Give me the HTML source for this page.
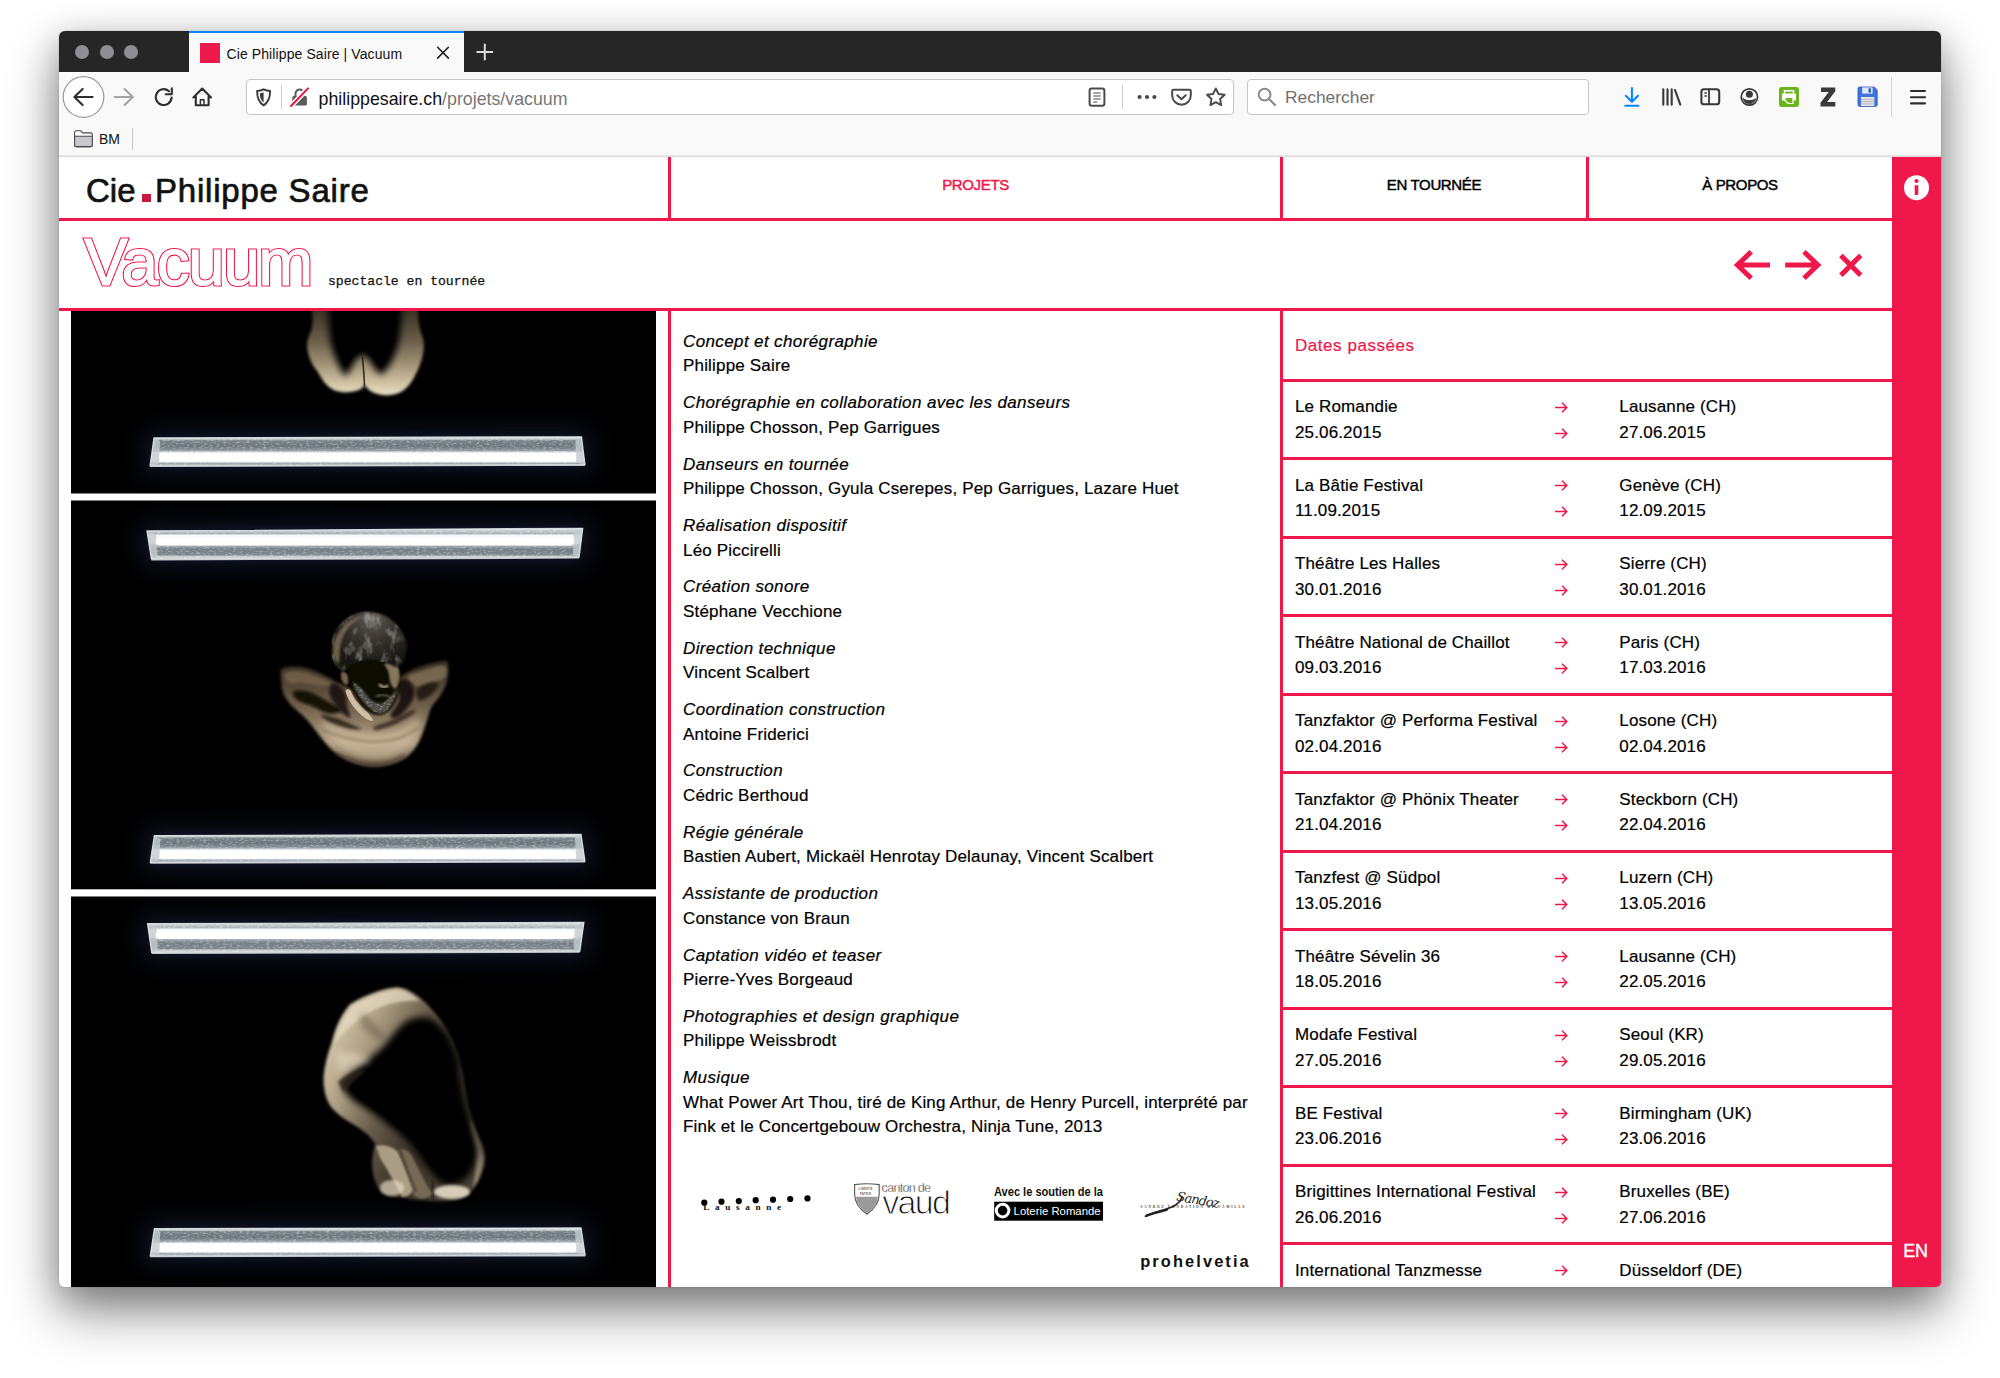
<!DOCTYPE html>
<html lang="fr">
<head>
<meta charset="utf-8">
<title>Cie Philippe Saire | Vacuum</title>
<style>
html,body{margin:0;padding:0;background:#fff;}
body{width:2000px;height:1378px;overflow:hidden;position:relative;font-family:"Liberation Sans",sans-serif;color:#000;}
#win{position:absolute;left:59px;top:31px;width:1882px;height:1256px;border-radius:6px 6px 5px 5px;overflow:hidden;background:#fff;
 box-shadow:0 0 1px rgba(0,0,0,.5),0 25px 52px rgba(0,0,0,.44),0 8px 34px rgba(0,0,0,.22);}
#abs{position:absolute;left:-59px;top:-31px;width:2000px;height:1378px;}
#abs div,#abs span,#abs svg{position:absolute;}
.r{background:#f0174b;}
/* ---------- browser chrome ---------- */
#titlebar{left:59px;top:31px;width:1882px;height:41px;background:#262626;}
.tl{width:14px;height:14px;border-radius:50%;background:#8e8e93;top:45px;}
#tab{left:189px;top:31px;width:275px;height:41px;background:#f9f9f9;}
#tab i{position:absolute;left:0;top:0;width:100%;height:2px;background:#0a84ff;}
#fav{left:200px;top:43px;width:20px;height:20px;background:#ee1a4b;}
#tabt{left:226.5px;top:44px;letter-spacing:.1px;font-size:14px;line-height:20px;color:#111;white-space:nowrap;}
#toolbar{left:59px;top:72px;width:1882px;height:84px;background:#f9f9f9;}
#tbline{left:59px;top:155px;width:1882px;height:2px;background:linear-gradient(#ececec,#d4d4d4);}
#urlbar{left:246px;top:79px;width:986px;height:34px;border:1px solid #c6c6c6;border-radius:4px;background:#fff;}
#url{left:318.5px;top:86.5px;font-size:17.8px;line-height:24px;white-space:nowrap;color:#111;}
#url b{font-weight:normal;color:#777;}
#search{left:1247px;top:79px;width:340px;height:34px;border:1px solid #c6c6c6;border-radius:4px;background:#fff;}
#searcht{left:1285px;top:85px;font-size:17.4px;line-height:24px;color:#6f6f6f;white-space:nowrap;}
#bm{left:99px;top:129px;font-size:14px;line-height:20px;color:#111;}
.vsep{width:1px;background:#c9c9c9;}
/* ---------- page ---------- */
.nav{font-size:15px;line-height:20px;top:175px;white-space:nowrap;letter-spacing:-.35px;-webkit-text-stroke:.45px currentColor;transform:translateX(-50%);}
#logo1,#logo2{font-size:33px;line-height:40px;top:171px;white-space:nowrap;color:#111;-webkit-text-stroke:.7px #111;}
#vac{left:84px;top:223.6px;font-size:66px;line-height:76px;letter-spacing:-1.6px;color:#f0174b;-webkit-text-stroke:3.1px #f0174b;white-space:nowrap;}
#vac::after{content:"Vacuum";position:absolute;left:0;top:0;color:#fff;-webkit-text-stroke:.9px #fff;}
#sub{left:328px;top:274.2px;font-family:"Liberation Mono",monospace;font-size:13.1px;line-height:16px;white-space:nowrap;color:#111;-webkit-text-stroke:.25px #111;}
.t{font-size:17px;line-height:24.6px;white-space:nowrap;letter-spacing:.18px;-webkit-text-stroke:.2px #000;}
.t i{letter-spacing:.38px;}
.d{font-size:17px;line-height:25.7px;white-space:nowrap;letter-spacing:.14px;-webkit-text-stroke:.2px #000;}
.ar{width:13px;height:11px;}
</style>
</head>
<body>
<div id="win"><div id="abs">

<!-- ======= BROWSER CHROME ======= -->
<div id="titlebar"></div>
<div class="tl" style="left:75px"></div><div class="tl" style="left:99.5px"></div><div class="tl" style="left:124px"></div>
<div id="tab"><i></i></div>
<div id="fav"></div>
<div id="tabt">Cie Philippe Saire | Vacuum</div>
<div id="toolbar"></div>
<div id="tbline"></div>
<div id="urlbar"></div>
<div id="url">philippesaire.ch<b>/projets/vacuum</b></div>
<div id="search"></div>
<div id="searcht">Rechercher</div>
<div id="bm">BM</div>
<div class="vsep" style="left:132px;top:128px;height:22px"></div>
<div class="vsep" style="left:281px;top:85px;height:24px"></div>
<div class="vsep" style="left:1122px;top:85px;height:24px"></div>
<div class="vsep" style="left:1891px;top:77px;height:40px;background:#d6d6d6"></div>
<!--CHROME-ICONS-->
<svg style="left:0;top:0" width="2000" height="160" viewBox="0 0 2000 160" fill="none" stroke-linecap="round" stroke-linejoin="round">
<!-- tab close + new tab -->
<path d="M437.6 47.3l10.8 10.8M448.4 47.3l-10.8 10.8" stroke="#1c1c1e" stroke-width="1.5"/>
<path d="M476.5 52h16.6M484.8 43.7v16.6" stroke="#dcdcdf" stroke-width="2" stroke-linecap="butt"/>
<!-- back -->
<circle cx="83.5" cy="97" r="20.3" fill="#fff" stroke="#98989b" stroke-width="1.2"/>
<path d="M92.6 97H75M82.6 88.9L74.4 97l8.2 8.1" stroke="#2e2e30" stroke-width="2.1"/>
<!-- forward -->
<path d="M114.6 97h17.6M124.6 88.9l8.2 8.1-8.2 8.1" stroke="#a4a4a6" stroke-width="2.1"/>
<!-- reload -->
<path d="M171.6 97.6a7.9 7.9 0 1 1-2.6-6.4" stroke="#2e2e30" stroke-width="2.1"/>
<path d="M171.8 88.4v5.9h-6" stroke="#2e2e30" stroke-width="2.1"/>
<!-- home -->
<path d="M193.4 97.4l8.8-8.9 8.8 8.9M195.8 96.4v8.9h12.8v-8.9" stroke="#2e2e30" stroke-width="2.1"/>
<path d="M200.4 105v-5.2h3.6v5.2" stroke="#2e2e30" stroke-width="1.5"/>
<!-- folder -->
<path d="M74.6 132.4c0-1 .7-1.7 1.700-1.700h4.300l2 2.200h8c1 0 1.700.7 1.700 1.700v10.300c0 1-.7 1.700-1.700 1.700H76.300c-1 0-1.700-.7-1.700-1.700z" fill="#fbfbfb" stroke="#4a4a4d" stroke-width="1.1"/>
<path d="M74.6 136.300h17.700v8.600c0 1-.7 1.700-1.700 1.700H76.300c-1 0-1.700-.7-1.700-1.700z" fill="#c9c9cd" stroke="#4a4a4d" stroke-width="1.1"/>
<!-- shield -->
<path d="M263.6 89.300c2.300 1.200 4.300 1.600 6.500 1.700 0 6.400-1.400 11.400-6.500 14.400-5.100-3-6.500-8-6.500-14.400 2.200-.1 4.200-.5 6.500-1.700z" stroke="#3a3a3c" stroke-width="1.9"/>
<path d="M263.6 92.200v10.400c-2.700-2-3.700-5-3.800-9.300 1.400-.2 2.600-.5 3.800-1.100z" fill="#3a3a3c" stroke="none"/>
<!-- lock with slash -->
<path d="M295.500 96v-2.300a4.100 4.100 0 0 1 8.200 0V96" stroke="#5a5a5d" stroke-width="2"/>
<rect x="292.300" y="96" width="14.600" height="9.600" rx="1.600" fill="#5a5a5d" stroke="none"/>
<path d="M290.800 106.200L308.400 88" stroke="#fff" stroke-width="5"/>
<path d="M291 106L308 88.400" stroke="#e8173f" stroke-width="2"/>
<!-- reader -->
<rect x="1089.600" y="88.400" width="14.800" height="17.400" rx="2.200" stroke="#4a4a4d" stroke-width="2"/>
<path d="M1093.300 93h7.400M1093.300 96h7.400M1093.300 99h7.400M1093.300 102h4" stroke="#4a4a4d" stroke-width="1.100" stroke-linecap="butt"/>
<!-- dots -->
<circle cx="1139.600" cy="97" r="2.100" fill="#4a4a4d"/><circle cx="1147" cy="97" r="2.100" fill="#4a4a4d"/><circle cx="1154.400" cy="97" r="2.100" fill="#4a4a4d"/>
<!-- pocket -->
<path d="M1173.400 89.700h16.200c.7 0 1.200.5 1.200 1.200v4.600a9.300 9.300 0 0 1-18.600 0v-4.600c0-.7.500-1.200 1.200-1.200z" stroke="#4a4a4d" stroke-width="2"/>
<path d="M1177.300 95.300l4.200 4 4.200-4" stroke="#4a4a4d" stroke-width="2"/>
<!-- star -->
<path d="M1215.800 88.400l2.700 5.600 6.100.8-4.500 4.200 1.100 6.100-5.400-3-5.400 3 1.100-6.100-4.500-4.200 6.100-.8z" stroke="#4a4a4d" stroke-width="1.900"/>
<!-- search -->
<circle cx="1264.600" cy="94.600" r="5.900" stroke="#8a8a8d" stroke-width="2"/>
<path d="M1269 99l6 6" stroke="#8a8a8d" stroke-width="2.200"/>
<!-- download -->
<path d="M1631.900 88v13.500M1625.800 95.800l6.100 6 6.100-6M1625.300 105.800h13.200" stroke="#0a84ff" stroke-width="2.100"/>
<!-- library -->
<path d="M1663.300 89.200v15.600M1667.500 89.200v15.600M1671.700 89.200v15.600M1675 90l5.300 14.600" stroke="#38383a" stroke-width="2.100"/>
<!-- sidebar -->
<rect x="1701.400" y="89.300" width="17.800" height="15" rx="2.600" stroke="#38383a" stroke-width="2.100"/>
<path d="M1709 89.500v14.600" stroke="#38383a" stroke-width="1.800"/>
<path d="M1704.400 93h2.400M1704.400 96h2.400" stroke="#38383a" stroke-width="1.300" stroke-linecap="butt"/>
<!-- account -->
<circle cx="1749.400" cy="97" r="8.200" stroke="#38383a" stroke-width="1.700"/>
<circle cx="1749.400" cy="94.200" r="3.500" fill="#38383a"/>
<path d="M1743.200 98.800c1 3.400 3.400 4.800 6.200 4.800s5.200-1.400 6.200-4.800c-1.900 1.300-3.900 1.800-6.200 1.800s-4.300-.5-6.200-1.800z" fill="#38383a" stroke="#38383a" stroke-width="1"/>
<!-- printer (green) -->
<rect x="1779" y="87" width="20" height="20" rx="2.400" fill="#6cb41e"/>
<path d="M1784.500 93.600v-2.900h9v2.900" stroke="#fff" stroke-width="1.500" stroke-linecap="butt" stroke-linejoin="miter"/>
<rect x="1782" y="93.600" width="14" height="6.800" rx="1" fill="#fff"/>
<path d="M1785 97.500h8v6h-4.800L1785 100.400z" fill="#6cb41e" stroke="#fff" stroke-width="1.200"/>
<!-- Z -->
<path d="M1821 87.600h14.300v3.600l-8.200 10.700h8.200v4.500h-14.800v-3.600l8.200-10.700H1821z" fill="#3a3a3c"/>
<!-- floppy -->
<path d="M1858 88.600c0-.9.700-1.600 1.600-1.600h14.600l3 3v14.800c0 .9-.7 1.600-1.600 1.600h-16c-.9 0-1.600-.7-1.600-1.600z" fill="#3f74dc" stroke="#2b57b8" stroke-width=".8"/>
<rect x="1862.200" y="87.400" width="10.400" height="6.200" fill="#dfe6f4"/>
<rect x="1868.600" y="88.300" width="2.300" height="4.300" fill="#2b57b8"/>
<rect x="1861" y="97" width="13.300" height="9" fill="#e9e9ec"/>
<path d="M1861 99.300h13.300M1861 101.600h13.300M1861 103.900h13.300" stroke="#a9a9b0" stroke-width=".9" stroke-linecap="butt"/>
<!-- hamburger -->
<path d="M1911 91h14M1911 97.200h14M1911 103.400h14" stroke="#2e2e30" stroke-width="2.100"/>
</svg>
<!--/CHROME-ICONS-->

<!-- ======= PAGE ======= -->
<div class="r" style="left:1892px;top:157px;width:49px;height:1130px"></div>
<div class="r" style="left:59px;top:218px;width:1833px;height:3px"></div>
<div class="r" style="left:59px;top:308px;width:1833px;height:3px"></div>
<div class="r" style="left:668px;top:157px;width:3px;height:62px"></div>
<div class="r" style="left:1280px;top:157px;width:3px;height:62px"></div>
<div class="r" style="left:1586px;top:157px;width:3px;height:62px"></div>
<div class="r" style="left:668px;top:310px;width:3px;height:977px"></div>
<div class="r" style="left:1280px;top:310px;width:3px;height:977px"></div>

<div id="logo1" style="left:86px">Cie</div>
<div style="left:142px;top:194px;width:9px;height:8px;background:#c41a40"></div>
<div id="logo2" style="left:155px;letter-spacing:.78px">Philippe Saire</div>
<div class="nav" style="left:975.5px;color:#f0174b">PROJETS</div>
<div class="nav" style="left:1434px">EN TOURNÉE</div>
<div class="nav" style="left:1740px">À PROPOS</div>

<div id="vac">Vacuum</div>
<div id="sub">spectacle en tournée</div>
<!--PAGE-ICONS-->
<svg style="left:1700px;top:157px" width="241" height="160" viewBox="1700 157 241 160" fill="none">
<circle cx="1916.500" cy="187.700" r="12.500" fill="#fff"/>
<circle cx="1916.500" cy="181" r="2.100" fill="#f0174b"/>
<rect x="1914.700" y="185.200" width="3.600" height="9.800" fill="#f0174b"/>
<path d="M1770 265h-33M1751.200 251.800L1737.400 265l13.800 13.200" stroke="#f0174b" stroke-width="5" stroke-linejoin="miter" stroke-miterlimit="10"/>
<path d="M1785.200 265h33M1804 251.800l13.800 13.200-13.800 13.200" stroke="#f0174b" stroke-width="5" stroke-linejoin="miter" stroke-miterlimit="10"/>
<path d="M1840.900 255.400l19.800 19.800M1860.700 255.400l-19.800 19.800" stroke="#f0174b" stroke-width="5"/>
</svg>
<div style="left:1903.300px;top:1239.500px;font-size:18px;line-height:22px;color:#fff;-webkit-text-stroke:.35px #fff;letter-spacing:-.2px">EN</div>
<!--/PAGE-ICONS-->

<!--PHOTOS-->
<svg style="left:60px;top:311px" width="610" height="977" viewBox="60 311 610 977">
<defs>
<filter id="b1" x="-5%" y="-50%" width="110%" height="200%"><feGaussianBlur stdDeviation=".7"/></filter>
<filter id="b2s" x="-20%" y="-20%" width="140%" height="140%"><feGaussianBlur stdDeviation="1.1"/></filter>
<filter id="b2" x="-20%" y="-20%" width="140%" height="140%"><feGaussianBlur stdDeviation="1.6"/></filter>
<filter id="b3" x="-5%" y="-80%" width="110%" height="260%"><feGaussianBlur stdDeviation="2.2"/></filter>
<filter id="b4" x="-30%" y="-30%" width="160%" height="160%"><feGaussianBlur stdDeviation="3.5"/></filter>
<filter id="b5" x="-5%" y="-80%" width="110%" height="260%"><feGaussianBlur stdDeviation="4.5"/></filter>
<filter id="b8" x="-40%" y="-40%" width="180%" height="180%"><feGaussianBlur stdDeviation="7"/></filter>
<filter id="b14" x="-10%" y="-250%" width="120%" height="600%"><feGaussianBlur stdDeviation="13"/></filter>
<filter id="noise" x="0" y="0" width="100%" height="100%"><feTurbulence type="fractalNoise" baseFrequency=".3 .55" numOctaves="2" seed="7" result="n"/><feColorMatrix in="n" type="matrix" values="0 0 0 0 1  0 0 0 0 1  0 0 0 0 1  0 0 0 2.6 -1.25"/><feComposite in2="SourceGraphic" operator="in"/></filter>
<filter id="hair" x="-10%" y="-10%" width="120%" height="120%"><feTurbulence type="fractalNoise" baseFrequency=".11 .07" numOctaves="3" seed="11" result="n"/><feColorMatrix in="n" type="matrix" values="0 0 0 0 .72  0 0 0 0 .70  0 0 0 0 .66  0 0 0 3.2 -1.55"/><feComposite in2="SourceGraphic" operator="in"/><feGaussianBlur stdDeviation=".7"/></filter>
<linearGradient id="tgb" x1="0" y1="0" x2="0" y2="1"><stop offset="0" stop-color="#e6eaec"/><stop offset=".08" stop-color="#c5ccd0"/><stop offset=".13" stop-color="#7a8389"/><stop offset=".32" stop-color="#6c757b"/><stop offset=".47" stop-color="#8d969c"/><stop offset=".55" stop-color="#f8fafc"/><stop offset=".84" stop-color="#f8fafc"/><stop offset=".9" stop-color="#939ca2"/><stop offset="1" stop-color="#cdd3d7"/></linearGradient>
<linearGradient id="tgt" x1="0" y1="1" x2="0" y2="0"><stop offset="0" stop-color="#dde2e5"/><stop offset=".1" stop-color="#c2c9cd"/><stop offset=".15" stop-color="#7e878d"/><stop offset=".34" stop-color="#747d83"/><stop offset=".47" stop-color="#929ba1"/><stop offset=".53" stop-color="#f8fafc"/><stop offset=".77" stop-color="#f8fafc"/><stop offset=".83" stop-color="#a9b1b6"/><stop offset="1" stop-color="#dfe4e7"/></linearGradient>
<linearGradient id="sk1" x1="0" y1="311" x2="0" y2="396" gradientUnits="userSpaceOnUse"><stop offset="0" stop-color="#393224"/><stop offset=".35" stop-color="#6a5e49"/><stop offset=".65" stop-color="#a5977a"/><stop offset=".86" stop-color="#d2c5a5"/><stop offset="1" stop-color="#ebe2c8"/></linearGradient>
<linearGradient id="sk2" x1="0" y1="665" x2="0" y2="768" gradientUnits="userSpaceOnUse"><stop offset="0" stop-color="#3a2f22"/><stop offset=".4" stop-color="#6f5f4a"/><stop offset=".75" stop-color="#b3a083"/><stop offset="1" stop-color="#5a4b39"/></linearGradient>
<linearGradient id="sk3" x1="322" y1="1040" x2="488" y2="1120" gradientUnits="userSpaceOnUse"><stop offset="0" stop-color="#d6caae"/><stop offset=".22" stop-color="#ad9f84"/><stop offset=".45" stop-color="#665b48"/><stop offset=".7" stop-color="#3a3227"/><stop offset="1" stop-color="#4a4134"/></linearGradient>
<radialGradient id="hg" cx="372" cy="618" r="52" gradientUnits="userSpaceOnUse"><stop offset="0" stop-color="#5f5b54"/><stop offset=".45" stop-color="#37332e"/><stop offset="1" stop-color="#141210"/></radialGradient>
<clipPath id="c1"><rect x="71" y="311" width="585" height="182.5"/></clipPath>
<clipPath id="c2"><rect x="71" y="500.5" width="585" height="388.8"/></clipPath>
<clipPath id="c3"><rect x="71" y="896.5" width="585" height="391"/></clipPath>
</defs>
<rect x="71" y="311" width="585" height="182.5" fill="#000"/><rect x="71" y="500.5" width="585" height="388.8" fill="#000"/><rect x="71" y="896.5" width="585" height="391" fill="#000"/>
<g clip-path="url(#c1)">
<path d="M311.7 305 C313 318 312.8 324 311.5 330 C308 338 306.5 342 307.3 348 C308 355 311 364 317.2 371 C321 377 323 381 326 384.2 C331 389.5 337 391.9 344.5 392.2 C352 392.2 358 391 361.5 388.5 C363.5 387 364.3 385.8 364.6 383 C365 386.5 366.5 388.5 370 390.8 C375 394 381 395.4 387.5 395.2 C394 395 399.5 393.5 404 390 C409 386 412.5 381 415 375.5 C418.5 369 421.5 362 423 354 C424.3 347 424.2 341 422 335 C419 328 418.2 322 418 305 Z" fill="url(#sk1)" filter="url(#b2)"/>
<path d="M328 300 C329 318 328.5 330 330 340 C332 350 335 358 338.5 365 C341 370 343 374.5 345.5 375.8 C348 374.5 351 368 354.6 362.2 C357 358 359.5 355.6 362.3 355.6 C365.5 355.6 368 358 370.5 362.2 C374 368 377.5 373 381 374.6 C384.5 373 388.5 367 392 361 C396 353 398.5 346 399.7 338 C401 328 401.5 318 402.5 300 Z" fill="#000" filter="url(#b4)"/>
<path d="M333 300 C334 320 335 335 339 350 C342 358 344 364 345.5 368 C349 362 354 352 362.3 349 C371 352 376 362 381 368 C386 360 391 350 394 338 C396 325 397 312 397 300 Z" fill="#000" filter="url(#b2)"/>
<path d="M362.5 357 C363.5 368 364.2 378 364.6 386" stroke="#1a140c" stroke-width="1.6" fill="none" filter="url(#b1)" opacity=".85"/>
<polygon points="144.0,430.0 591.5,428.8 595.0,473.0 140.0,474.2" fill="#2c3860" opacity=".34" filter="url(#b14)"/>
<polygon points="153.0,437.0 582.5,435.8 586.0,467.0 149.0,468.2" fill="#3a4672" opacity=".12" filter="url(#b5)"/>
<polygon points="154.0,438.0 581.5,436.8 585.0,465.0 150.0,466.2" fill="url(#tgb)"/>
<polygon points="154.0,438.0 581.5,436.8 585.0,465.0 150.0,466.2" fill="#fff" filter="url(#noise)" opacity=".4"/>
<polygon points="154.0,438.0 160.0,441.0 159.0,463.7 150.0,466.2" fill="#c4cbd0" opacity=".8"/>
<polygon points="581.5,436.8 575.5,439.8 576.0,462.5 585.0,465.0" fill="#c4cbd0" opacity=".8"/>
<polyline points="150.0,466.2 154.0,438.0 581.5,436.8 585.0,465.0" fill="none" stroke="#dfe4e7" stroke-width="1.3" opacity=".9"/>
<polyline points="150.0,466.2 585.0,465.0" fill="none" stroke="#d5dadd" stroke-width="1.8" opacity=".9"/>
<rect x="159" y="451.5" width="418" height="11" rx="4" fill="#eef3ff" opacity=".35" filter="url(#b2)"/>
<rect x="160" y="453" width="416" height="8" rx="3.5" fill="#fff" filter="url(#b1)"/>
</g>
<g clip-path="url(#c2)">
<polygon points="137.0,523.0 592.7,520.3 589.0,565.7 141.5,567.5" fill="#2c3860" opacity=".34" filter="url(#b14)"/>
<polygon points="146.0,530.0 583.7,527.3 580.0,559.7 150.5,561.5" fill="#3a4672" opacity=".12" filter="url(#b5)"/>
<polygon points="147.0,531.0 582.7,528.3 579.0,557.7 151.5,559.5" fill="url(#tgt)"/>
<polygon points="147.0,531.0 582.7,528.3 579.0,557.7 151.5,559.5" fill="#fff" filter="url(#noise)" opacity=".4"/>
<polygon points="147.0,531.0 156.0,533.5 157.5,556.5 151.5,559.5" fill="#c4cbd0" opacity=".8"/>
<polygon points="582.7,528.3 573.7,530.8 573.0,554.7 579.0,557.7" fill="#c4cbd0" opacity=".8"/>
<polyline points="151.5,559.5 147.0,531.0 582.7,528.3 579.0,557.7" fill="none" stroke="#dfe4e7" stroke-width="1.3" opacity=".9"/>
<polyline points="151.5,559.5 579.0,557.7" fill="none" stroke="#d5dadd" stroke-width="1.8" opacity=".9"/>
<rect x="155" y="536.0" width="420" height="11.0" rx="4" fill="#eef3ff" opacity=".35" filter="url(#b2)"/>
<rect x="156" y="537.5" width="418" height="8.0" rx="3.5" fill="#fff" filter="url(#b1)"/>
<path d="M281.8 669.1 C284.5 666.4 292.2 666.3 297.7 666.6 C303.3 666.9 309.8 669.1 315.2 671.0 C320.5 672.9 325.3 676.0 329.7 678.2 C334.0 680.5 336.0 682.1 341.3 684.3 C346.6 686.6 354.3 690.6 361.6 691.6 C368.9 692.6 378.5 692.4 384.8 690.1 C391.1 687.8 394.5 681.3 399.3 677.8 C404.2 674.3 408.5 671.5 413.8 669.1 C419.2 666.7 425.8 664.6 431.3 663.3 C436.7 662.0 443.7 659.8 446.5 661.1 C449.3 662.4 448.2 667.6 448.2 671.3 C448.2 674.9 447.9 678.8 446.5 682.9 C445.1 687.0 442.5 691.8 440.0 696.0 C437.4 700.1 433.4 703.4 431.3 707.6 C429.1 711.7 428.6 715.8 426.9 720.6 C425.2 725.5 423.3 731.8 421.1 736.6 C418.9 741.4 417.0 745.8 413.8 749.7 C410.7 753.5 407.1 757.1 402.2 759.8 C397.4 762.5 390.6 764.8 384.8 765.9 C379.0 767.0 373.2 767.4 367.4 766.6 C361.6 765.9 355.3 763.9 350.0 761.6 C344.7 759.3 339.8 756.3 335.5 752.8 C331.1 749.4 327.5 745.1 323.9 740.9 C320.2 736.8 317.1 732.0 313.7 727.9 C310.3 723.8 307.2 719.9 303.5 716.3 C299.9 712.6 295.2 709.7 291.9 706.1 C288.7 702.5 285.7 698.4 283.9 694.5 C282.2 690.6 281.8 687.1 281.5 682.9 C281.1 678.7 279.1 671.8 281.8 669.1 Z" fill="url(#sk2)" filter="url(#b2)"/>
<path d="M322.4 720.6 C325.3 719.4 338.6 727.2 347.1 729.3 C355.5 731.5 364.5 733.7 373.2 733.7 C381.9 733.7 391.8 732.0 399.3 729.3 C406.8 726.7 415.3 716.8 418.2 717.7 C421.1 718.7 418.9 729.8 416.7 735.1 C414.6 740.5 410.5 745.8 405.1 749.7 C399.8 753.5 391.6 756.9 384.8 758.4 C378.0 759.8 371.3 759.8 364.5 758.4 C357.7 756.9 350.0 753.3 344.2 749.7 C338.4 746.0 333.3 741.4 329.7 736.6 C326.0 731.8 319.5 721.8 322.4 720.6 Z" fill="#d2c1a4" opacity=".6" filter="url(#b4)"/>
<path d="M284.7 672.7 C286.6 670.8 295.1 670.6 300.6 671.3 C306.2 672.0 312.7 674.9 318.1 677.1 C323.4 679.3 332.1 682.9 332.6 684.3 C333.1 685.8 325.8 686.0 321.0 685.8 C316.1 685.5 308.9 683.4 303.5 682.9 C298.2 682.4 292.2 684.6 289.0 682.9 C285.9 681.2 282.7 674.7 284.7 672.7 Z" fill="#7a6850" opacity=".75" filter="url(#b2)"/>
<path d="M408.0 677.1 C409.0 674.5 416.5 672.5 422.6 670.6 C428.6 668.6 440.6 664.4 444.3 665.5 C448.1 666.6 447.2 674.2 445.1 677.1 C442.9 680.0 436.0 681.4 431.3 682.9 C426.5 684.3 420.6 686.8 416.7 685.8 C412.9 684.8 407.1 679.6 408.0 677.1 Z" fill="#86745c" opacity=".75" filter="url(#b2)"/>
<path d="M293.4 691.6 C295.1 690.1 302.6 690.1 307.9 691.6 C313.2 693.0 319.7 697.2 325.3 700.3 C330.9 703.4 340.8 708.3 341.3 710.5 C341.8 712.6 333.1 714.1 328.2 713.4 C323.4 712.6 317.3 708.3 312.2 706.1 C307.2 703.9 300.9 702.7 297.7 700.3 C294.6 697.9 291.7 693.0 293.4 691.6 Z" fill="#0e0905" opacity=".92" filter="url(#b2)"/>
<path d="M321.0 714.8 C321.9 714.1 330.1 716.0 335.5 717.7 C340.8 719.4 348.5 723.0 352.9 725.0 C357.2 726.9 362.6 728.8 361.6 729.3 C360.6 729.8 352.4 729.1 347.1 727.9 C341.8 726.7 334.0 724.3 329.7 722.1 C325.3 719.9 320.0 715.5 321.0 714.8 Z" fill="#1a120b" opacity=".8" filter="url(#b2)"/>
<path d="M332.6 682.9 C335.0 682.4 341.8 687.7 344.2 691.6 C346.6 695.5 346.1 701.8 347.1 706.1 C348.1 710.5 351.4 717.2 350.0 717.7 C348.5 718.2 341.8 712.9 338.4 709.0 C335.0 705.1 330.6 698.9 329.7 694.5 C328.7 690.1 330.1 683.4 332.6 682.9 Z" fill="#140e08" opacity=".85" filter="url(#b2)"/>
<path d="M397.9 682.9 C399.1 679.5 403.9 679.0 406.6 680.0 C409.3 681.0 412.9 685.3 413.8 688.7 C414.8 692.1 413.8 696.7 412.4 700.3 C410.9 703.9 407.8 707.6 405.1 710.5 C402.5 713.4 398.8 717.0 396.4 717.7 C394.0 718.4 390.1 717.7 390.6 714.8 C391.1 711.9 398.1 705.6 399.3 700.3 C400.5 695.0 396.7 686.3 397.9 682.9 Z" fill="#120c07" opacity=".9" filter="url(#b2)"/>
<path d="M416.7 690.1 C418.2 687.2 424.7 683.9 428.4 682.9 C432.0 681.9 438.0 682.4 438.5 684.3 C439.0 686.3 434.4 691.8 431.3 694.5 C428.1 697.2 422.1 701.0 419.7 700.3 C417.2 699.6 415.3 693.0 416.7 690.1 Z" fill="#1a120b" opacity=".85" filter="url(#b2)"/>
<path d="M374.7 726.4 C377.1 724.9 384.6 723.3 390.6 720.6 C396.7 718.0 407.1 711.7 410.9 710.5 C414.8 709.3 416.7 710.9 413.8 713.4 C410.9 715.8 399.8 722.2 393.5 725.0 C387.2 727.8 379.3 729.8 376.1 730.1 C373.0 730.3 372.2 728.0 374.7 726.4 Z" fill="#2a1e14" opacity=".75" filter="url(#b2)"/>
<path d="M322.4 730.1 C326.5 731.4 338.6 736.1 347.1 738.0 C355.5 740.0 364.5 741.7 373.2 741.7 C381.9 741.7 391.8 740.3 399.3 738.0 C406.8 735.7 415.1 729.6 418.2 727.9" stroke="#7b6951" stroke-width="2.4" fill="none" opacity=".55" filter="url(#b2)"/>
<path d="M335.5 753.3 C339.8 754.9 353.4 761.0 361.6 762.7 C369.8 764.4 377.6 764.6 384.8 763.4 C392.1 762.2 401.8 756.8 405.1 755.5" stroke="#3b2f22" stroke-width="3" fill="none" opacity=".55" filter="url(#b2)"/>
<path d="M345.6 691.6 C346.1 694.3 349.7 701.8 352.9 706.1 C356.0 710.5 361.1 715.3 364.5 717.7 C367.9 720.1 372.7 721.6 373.2 720.6 C373.7 719.7 370.3 715.3 367.4 711.9 C364.5 708.5 358.7 703.9 355.8 700.3 C352.9 696.7 351.7 691.6 350.0 690.1 C348.3 688.7 345.1 688.9 345.6 691.6 Z" fill="#d6c4a8" opacity=".95" filter="url(#b1)"/>
<path d="M350.0 665.5 C352.0 661.8 355.8 659.4 361.6 658.2 C367.4 657.0 378.8 657.0 384.8 658.2 C390.9 659.4 395.3 661.8 397.9 665.5 C400.4 669.1 400.2 674.7 400.1 680.0 C399.9 685.3 399.0 692.3 397.2 697.4 C395.3 702.5 392.4 707.5 389.2 710.5 C385.9 713.4 381.7 715.4 377.6 715.1 C373.4 714.9 368.4 712.4 364.5 709.0 C360.6 705.6 356.9 699.3 354.3 694.5 C351.8 689.7 350.0 684.8 349.3 680.0 C348.5 675.1 347.9 669.1 350.0 665.5 Z" fill="#0a0806" filter="url(#b2s)"/>
<path d="M352.9 682.9 C352.6 684.3 357.2 693.0 360.1 697.4 C363.0 701.8 366.9 706.4 370.3 709.0 C373.7 711.7 377.1 713.9 380.5 713.4 C383.9 712.9 387.8 710.0 390.6 706.1 C393.4 702.2 397.2 691.8 397.2 690.1 C397.2 688.5 393.2 693.8 390.6 696.0 C388.1 698.1 385.1 702.5 381.9 703.2 C378.8 703.9 375.1 702.7 371.8 700.3 C368.4 697.9 364.7 691.6 361.6 688.7 C358.5 685.8 353.1 681.4 352.9 682.9 Z" fill="#4f4d49" filter="url(#b2s)"/>
<path d="M352.9 682.9 C352.6 684.3 357.2 693.0 360.1 697.4 C363.0 701.8 366.9 706.4 370.3 709.0 C373.7 711.7 377.1 713.9 380.5 713.4 C383.9 712.9 387.8 710.0 390.6 706.1 C393.4 702.2 397.2 691.8 397.2 690.1 C397.2 688.5 393.2 693.8 390.6 696.0 C388.1 698.1 385.1 702.5 381.9 703.2 C378.8 703.9 375.1 702.7 371.8 700.3 C368.4 697.9 364.7 691.6 361.6 688.7 C358.5 685.8 353.1 681.4 352.9 682.9 Z" fill="#fff" filter="url(#noise)" opacity=".35"/>
<path d="M384.8 663.3 C386.1 662.1 394.0 662.4 396.4 664.7 C398.9 667.0 399.7 673.1 399.6 677.1 C399.5 681.1 397.2 687.7 395.7 688.7 C394.2 689.7 391.8 685.7 390.6 682.9 C389.4 680.1 389.4 675.3 388.4 672.0 C387.5 668.7 383.5 664.5 384.8 663.3 Z" fill="#8d7c64" filter="url(#b2s)" opacity=".95"/>
<path d="M379.0 684.3 C379.7 684.8 381.8 686.7 383.4 687.0 C384.9 687.2 387.6 686.0 388.4 685.8" stroke="#e0d2b8" stroke-width="1.8" fill="none" filter="url(#b2s)"/>
<path d="M376.1 696.0 C377.3 695.8 381.2 694.7 383.4 694.8 C385.5 694.9 388.2 696.4 389.2 696.7" stroke="#8a7a66" stroke-width="1.4" fill="none" filter="url(#b2s)"/>
<path d="M342.0 671.3 C343.0 670.6 346.0 672.2 347.1 674.2 C348.1 676.1 348.6 681.2 348.2 682.9 C347.9 684.6 346.1 685.1 344.9 684.3 C343.7 683.6 341.8 680.7 341.3 678.5 C340.8 676.4 341.0 672.0 342.0 671.3 Z" fill="#7a6350" filter="url(#b2s)"/>
<path d="M331.1 651.0 C330.9 645.6 331.6 638.9 334.0 633.5 C336.4 628.2 340.6 622.7 345.6 619.0 C350.7 615.4 358.0 612.4 364.5 611.8 C371.0 611.2 379.0 612.7 384.8 615.4 C390.6 618.1 395.7 623.0 399.3 627.7 C403.0 632.5 405.6 638.6 406.6 643.7 C407.6 648.8 406.6 654.3 405.1 658.2 C403.7 662.1 401.3 666.2 397.9 666.9 C394.5 667.6 389.4 663.8 384.8 662.6 C380.2 661.4 375.1 659.7 370.3 659.7 C365.5 659.7 360.1 660.6 355.8 662.6 C351.4 664.5 347.6 670.8 344.2 671.3 C340.8 671.8 337.6 668.9 335.5 665.5 C333.3 662.1 331.4 656.3 331.1 651.0 Z" fill="url(#hg)" filter="url(#b2s)"/>
<path d="M331.1 651.0 C330.9 645.6 331.6 638.9 334.0 633.5 C336.4 628.2 340.6 622.7 345.6 619.0 C350.7 615.4 358.0 612.4 364.5 611.8 C371.0 611.2 379.0 612.7 384.8 615.4 C390.6 618.1 395.7 623.0 399.3 627.7 C403.0 632.5 405.6 638.6 406.6 643.7 C407.6 648.8 406.6 654.3 405.1 658.2 C403.7 662.1 401.3 666.2 397.9 666.9 C394.5 667.6 389.4 663.8 384.8 662.6 C380.2 661.4 375.1 659.7 370.3 659.7 C365.5 659.7 360.1 660.6 355.8 662.6 C351.4 664.5 347.6 670.8 344.2 671.3 C340.8 671.8 337.6 668.9 335.5 665.5 C333.3 662.1 331.4 656.3 331.1 651.0 Z" fill="#fff" filter="url(#hair)" opacity=".4"/>
<path d="M333.3 653.9 C332.7 649.7 333.2 643.0 335.5 637.9 C337.8 632.8 342.7 627.0 347.1 623.4 C351.4 619.8 361.6 615.2 361.6 616.1 C361.6 617.1 350.6 624.3 347.1 629.2 C343.6 634.0 341.9 639.6 340.6 645.2 C339.2 650.7 340.3 661.1 339.1 662.6 C337.9 664.0 333.9 658.0 333.3 653.9 Z" fill="#85745c" filter="url(#b2s)" opacity=".75"/>
<polygon points="144.4,827.7 591.0,826.4 595.0,869.7 140.2,870.9" fill="#2c3860" opacity=".34" filter="url(#b14)"/>
<polygon points="153.4,834.7 582.0,833.4 586.0,863.7 149.2,864.9" fill="#3a4672" opacity=".12" filter="url(#b5)"/>
<polygon points="154.4,835.7 581.0,834.4 585.0,861.7 150.2,862.9" fill="url(#tgb)"/>
<polygon points="154.4,835.7 581.0,834.4 585.0,861.7 150.2,862.9" fill="#fff" filter="url(#noise)" opacity=".4"/>
<polygon points="154.4,835.7 160.4,838.7 159.2,860.4 150.2,862.9" fill="#c4cbd0" opacity=".8"/>
<polygon points="581.0,834.4 575.0,837.4 576.0,859.2 585.0,861.7" fill="#c4cbd0" opacity=".8"/>
<polyline points="150.2,862.9 154.4,835.7 581.0,834.4 585.0,861.7" fill="none" stroke="#dfe4e7" stroke-width="1.3" opacity=".9"/>
<polyline points="150.2,862.9 585.0,861.7" fill="none" stroke="#d5dadd" stroke-width="1.8" opacity=".9"/>
<rect x="159" y="849.0" width="418" height="11.0" rx="4" fill="#eef3ff" opacity=".35" filter="url(#b2)"/>
<rect x="160" y="850.5" width="416" height="8.0" rx="3.5" fill="#fff" filter="url(#b1)"/>
</g>
<g clip-path="url(#c3)">
<polygon points="137.6,915.7 593.9,914.5 589.7,959.8 141.8,961.1" fill="#2c3860" opacity=".34" filter="url(#b14)"/>
<polygon points="146.6,922.7 584.9,921.5 580.7,953.8 150.8,955.1" fill="#3a4672" opacity=".12" filter="url(#b5)"/>
<polygon points="147.6,923.7 583.9,922.5 579.7,951.8 151.8,953.1" fill="url(#tgt)"/>
<polygon points="147.6,923.7 583.9,922.5 579.7,951.8 151.8,953.1" fill="#fff" filter="url(#noise)" opacity=".4"/>
<polygon points="147.6,923.7 156.6,926.2 157.8,950.1 151.8,953.1" fill="#c4cbd0" opacity=".8"/>
<polygon points="583.9,922.5 574.9,925.0 573.7,948.8 579.7,951.8" fill="#c4cbd0" opacity=".8"/>
<polyline points="151.8,953.1 147.6,923.7 583.9,922.5 579.7,951.8" fill="none" stroke="#dfe4e7" stroke-width="1.3" opacity=".9"/>
<polyline points="151.8,953.1 579.7,951.8" fill="none" stroke="#d5dadd" stroke-width="1.8" opacity=".9"/>
<rect x="155" y="929.5" width="420" height="11" rx="4" fill="#eef3ff" opacity=".35" filter="url(#b2)"/>
<rect x="156" y="931" width="418" height="8" rx="3.5" fill="#fff" filter="url(#b1)"/>
<path d="M397 987.200 C385 988 366 994 349.800 1004.500 C341 1015 335 1028 331.700 1042.500 C327 1056 324 1068 323.600 1078.800 C323.500 1090 326 1100 331.700 1107.800 C339 1116 349 1122 358.900 1127.800 C366 1133 372 1138 375.200 1144.100 C373 1152 371.500 1161 372.500 1169.500 C373.500 1178 376 1186 380.700 1191.300 C386 1196 394 1197.500 402.400 1197.600 C410 1199.500 417 1200.500 424.200 1200.300 C434 1201.500 444 1201.500 453.200 1200.300 C461 1198.500 468 1195 473.200 1189.400 C479 1181 484 1171 485 1160.400 C485.500 1153 483.500 1146 480.400 1140.500 C476 1130 471.500 1119 468.600 1107.800 C466 1096 464.500 1084 462.300 1071.600 C460 1061 457 1051 453.200 1042.500 C448 1031 442 1021 435.100 1013.500 C429.500 1006 423.500 1000 416.900 995.400 C410.500 990.500 404 987.500 397 987.200 Z" fill="url(#sk3)" filter="url(#b2)"/>
<path d="M397 989 C382 991 364 998 352 1007 C344 1017 338 1030 335 1043 C345 1030 360 1016 378 1008 C392 1002 408 1000 420 1001 C413 995 405 990 397 989 Z" fill="#e9dfc6" opacity=".7" filter="url(#b2)"/>
<path d="M470 1120 C476 1134 482 1148 483 1160 C482 1172 478 1182 472 1189 C476 1176 476 1160 472 1146 C470 1136 468 1128 470 1120 Z" fill="#a3957b" opacity=".8" filter="url(#b2)"/>
<path d="M405 1022 C396 1030 390 1038 385 1045 C378 1052 371 1057 365 1062 C356 1069 347 1076 342 1084 C343 1090 346 1094 350 1098 C356 1103 362 1106 368 1110 C377 1116 385 1122 392 1128 C400 1134 406 1140 412 1146 C418 1154 423 1161 428 1168 C432 1174 436 1179 440 1182 C446 1186 452 1186 458 1184 C464 1181 469 1176 472 1170 C476 1164 478 1157 478 1150 C476 1140 473 1130 470 1120 C467 1110 464 1100 462 1090 C460 1080 459 1070 458 1060 C455 1051 452 1043 448 1035 C443 1028 437 1022 430 1018 C421 1016 412 1018 405 1022 Z" fill="#000" filter="url(#b4)"/>
<path d="M405 1022 C396 1030 390 1038 385 1045 C378 1052 371 1057 365 1062 C356 1069 347 1076 342 1084 C343 1090 346 1094 350 1098 C356 1103 362 1106 368 1110 C377 1116 385 1122 392 1128 C400 1134 406 1140 412 1146 C418 1154 423 1161 428 1168 C432 1174 436 1179 440 1182 C446 1186 452 1186 458 1184 C464 1181 469 1176 472 1170 C476 1164 478 1157 478 1150 C476 1140 473 1130 470 1120 C467 1110 464 1100 462 1090 C460 1080 459 1070 458 1060 C455 1051 452 1043 448 1035 C443 1028 437 1022 430 1018 C421 1016 412 1018 405 1022 Z" fill="#000" filter="url(#b2)" transform="translate(412 1100) scale(.86) translate(-412 -1100)"/>
<path d="M360 1012 C372 1020 380 1030 388 1042 C380 1040 370 1034 362 1026 Z" fill="#5b5040" filter="url(#b4)" opacity=".5"/>
<path d="M336 1052 C350 1050 362 1054 372 1062 C360 1064 348 1066 338 1074 Z" fill="#eadfc6" filter="url(#b4)" opacity=".5"/>
<path d="M338 1082 C346 1074 356 1070 366 1070 C358 1078 350 1084 344 1092 Z" fill="#2c2419" filter="url(#b2)" opacity=".8"/>
<path d="M376 1146 C384 1144 392 1146 398 1152 C404 1164 410 1176 414 1188 C412 1194 408 1197 402 1197 C396 1186 388 1170 380 1158 Z" fill="#a99d84" filter="url(#b2s)"/>
<path d="M398 1150 C404 1148 408 1150 412 1156 C418 1168 426 1184 432 1194 C428 1199 420 1200 414 1196 C410 1182 404 1166 398 1150 Z" fill="#7b6f5a" filter="url(#b2s)" opacity=".9"/>
<path d="M400 1150 C404 1162 410 1178 416 1192" stroke="#30281c" stroke-width="1.3" fill="none" filter="url(#b2s)"/>
<path d="M432 1180 C434 1188 434 1194 433 1199" stroke="#1c150d" stroke-width="1.5" fill="none" filter="url(#b2s)"/>
<ellipse cx="452" cy="1192" rx="18" ry="7" fill="#efe6d0" filter="url(#b2)" opacity=".85"/>
<ellipse cx="392" cy="1188" rx="12" ry="8" fill="#e6dcc4" filter="url(#b2)" opacity=".7"/>
<polygon points="144.4,1220.7 591.0,1219.9 595.2,1263.5 140.2,1264.4" fill="#2c3860" opacity=".34" filter="url(#b14)"/>
<polygon points="153.4,1227.7 582.0,1226.9 586.2,1257.5 149.2,1258.4" fill="#3a4672" opacity=".12" filter="url(#b5)"/>
<polygon points="154.4,1228.7 581.0,1227.9 585.2,1255.5 150.2,1256.4" fill="url(#tgb)"/>
<polygon points="154.4,1228.7 581.0,1227.9 585.2,1255.5 150.2,1256.4" fill="#fff" filter="url(#noise)" opacity=".4"/>
<polygon points="154.4,1228.7 160.4,1231.7 159.2,1253.9 150.2,1256.4" fill="#c4cbd0" opacity=".8"/>
<polygon points="581.0,1227.9 575.0,1230.9 576.2,1253.0 585.2,1255.5" fill="#c4cbd0" opacity=".8"/>
<polyline points="150.2,1256.4 154.4,1228.7 581.0,1227.9 585.2,1255.5" fill="none" stroke="#dfe4e7" stroke-width="1.3" opacity=".9"/>
<polyline points="150.2,1256.4 585.2,1255.5" fill="none" stroke="#d5dadd" stroke-width="1.8" opacity=".9"/>
<rect x="159" y="1242.0" width="418" height="11.0" rx="4" fill="#eef3ff" opacity=".35" filter="url(#b2)"/>
<rect x="160" y="1243.5" width="416" height="8.0" rx="3.5" fill="#fff" filter="url(#b1)"/>
</g>
</svg>
<!--/PHOTOS-->

<!--CREDITS-->
<div class="t" style="left:683px;top:329.9px"><i>Concept et chorégraphie</i><br>Philippe Saire</div>
<div class="t" style="left:683px;top:391.3px"><i>Chorégraphie en collaboration avec les danseurs</i><br>Philippe Chosson, Pep Garrigues</div>
<div class="t" style="left:683px;top:452.6px"><i>Danseurs en tournée</i><br>Philippe Chosson, Gyula Cserepes, Pep Garrigues, Lazare Huet</div>
<div class="t" style="left:683px;top:514.0px"><i>Réalisation dispositif</i><br>Léo Piccirelli</div>
<div class="t" style="left:683px;top:575.3px"><i>Création sonore</i><br>Stéphane Vecchione</div>
<div class="t" style="left:683px;top:636.7px"><i>Direction technique</i><br>Vincent Scalbert</div>
<div class="t" style="left:683px;top:698.1px"><i>Coordination construction</i><br>Antoine Friderici</div>
<div class="t" style="left:683px;top:759.4px"><i>Construction</i><br>Cédric Berthoud</div>
<div class="t" style="left:683px;top:820.8px"><i>Régie générale</i><br>Bastien Aubert, Mickaël Henrotay Delaunay, Vincent Scalbert</div>
<div class="t" style="left:683px;top:882.1px"><i>Assistante de production</i><br>Constance von Braun</div>
<div class="t" style="left:683px;top:943.5px"><i>Captation vidéo et teaser</i><br>Pierre-Yves Borgeaud</div>
<div class="t" style="left:683px;top:1004.9px"><i>Photographies et design graphique</i><br>Philippe Weissbrodt</div>
<div class="t" style="left:683px;top:1066.2px"><i>Musique</i><br>What Power Art Thou, tiré de King Arthur, de Henry Purcell, interprété par<br>Fink et le Concertgebouw Orchestra, Ninja Tune, 2013</div>
<!--/CREDITS-->

<!--LOGOS-->
<svg style="left:690px;top:1175px" width="580" height="112" viewBox="690 1175 580 112">
<!-- Lausanne -->
<g fill="#000"><circle cx="704.300" cy="1202.700" r="3.100"/><circle cx="721.500" cy="1201.700" r="3.100"/><circle cx="738.800" cy="1201.100" r="3.100"/><circle cx="755.700" cy="1200.200" r="3.100"/><circle cx="773" cy="1199.700" r="3.100"/><circle cx="790.200" cy="1199" r="3.100"/><circle cx="807.500" cy="1198.400" r="3.100"/></g>
<text x="703.300" y="1209.600" font-family="Liberation Serif,serif" font-weight="bold" font-size="9.200" letter-spacing="5.650" fill="#111">Lausanne</text>
<!-- canton de vaud -->
<path d="M854.600 1184.600c8-1.100 16.500-1.100 24.600 0v9.400c0 8.600-5.300 15.300-12.300 20.200-7-4.900-12.300-11.600-12.300-20.200z" fill="#fff" stroke="#555" stroke-width="1.100"/>
<path d="M856 1196.800h21.800c-.6 7-5 12.300-10.900 16.500-5.900-4.200-10.300-9.500-10.900-16.500z" fill="#9a9a9a"/>
<text x="858.600" y="1190.300" font-family="Liberation Sans,sans-serif" font-size="2.800" font-weight="bold" letter-spacing=".3" fill="#666">LIBERTÉ</text>
<text x="859.800" y="1195.300" font-family="Liberation Sans,sans-serif" font-size="2.800" font-weight="bold" letter-spacing=".3" fill="#666">PATRIE</text>
<text x="881.600" y="1191.600" font-family="Liberation Sans,sans-serif" font-size="12.600" letter-spacing="-.75" fill="#222" stroke="#fff" stroke-width=".35">canton de</text>
<text x="882.300" y="1213.700" font-family="Liberation Sans,sans-serif" font-size="34" letter-spacing="-1.700" fill="#111" stroke="#fff" stroke-width="1">vaud</text>
<!-- Loterie Romande -->
<text x="994" y="1196.200" font-family="Liberation Sans,sans-serif" font-weight="bold" font-size="12.600" textLength="109" lengthAdjust="spacingAndGlyphs" fill="#111">Avec le soutien de la</text>
<rect x="994.200" y="1201.700" width="108.800" height="19" fill="#000"/>
<circle cx="1002.600" cy="1210.600" r="6.300" fill="none" stroke="#fff" stroke-width="3"/>
<text x="1013.600" y="1215.300" font-family="Liberation Sans,sans-serif" font-size="11.600" textLength="87" lengthAdjust="spacingAndGlyphs" fill="#fff">Loterie Romande</text>
<!-- Sandoz -->
<text x="1140.500" y="1207.600" font-family="Liberation Serif,serif" font-size="3.400" letter-spacing="1.800" font-weight="bold" fill="#444">SANDOZ FONDATION DE FAMILLE</text>
<path d="M1145.500 1216.300c9-4.500 19-6 27-9.500 5-2.300 8-5.500 9.500-9.500" fill="none" stroke="#222" stroke-width="1.700" stroke-linecap="round"/>
<path d="M1146.500 1215.600c7-2.500 14-4 20.500-6" fill="none" stroke="#222" stroke-width="2.300" stroke-linecap="round"/>
<text x="0" y="0" transform="translate(1176 1200.500) rotate(10)" font-family="DejaVu Serif,serif" font-style="italic" font-size="13" letter-spacing="-.9" fill="#222">Sandoz</text>
<!-- prohelvetia -->
<text x="1140.200" y="1267.300" font-family="Liberation Sans,sans-serif" font-weight="bold" font-size="16.400" textLength="108.500" lengthAdjust="spacing" fill="#111">prohelvetia</text>
</svg>
<!--/LOGOS-->

<!--DATES-->
<div class="d" style="left:1295px;top:333.2px;color:#f0174b;-webkit-text-stroke:.2px #f0174b;letter-spacing:.55px">Dates passées</div>
<div class="r" style="left:1282px;top:378.9px;width:610px;height:3px"></div>
<div class="d" style="left:1295px;top:394.1px">Le Romandie<br>25.06.2015</div>
<div class="d" style="left:1619.3px;top:394.1px">Lausanne (CH)<br>27.06.2015</div>
<svg class="ar" style="left:1555px;top:401.9px" viewBox="0 0 13 11"><path d="M0 5.5H11.6M7 .8l4.8 4.7L7 10.2" fill="none" stroke="#f0174b" stroke-width="1.5"/></svg>
<svg class="ar" style="left:1555px;top:427.6px" viewBox="0 0 13 11"><path d="M0 5.5H11.6M7 .8l4.8 4.7L7 10.2" fill="none" stroke="#f0174b" stroke-width="1.5"/></svg>
<div class="r" style="left:1282px;top:457.4px;width:610px;height:3px"></div>
<div class="d" style="left:1295px;top:472.6px">La Bâtie Festival<br>11.09.2015</div>
<div class="d" style="left:1619.3px;top:472.6px">Genève (CH)<br>12.09.2015</div>
<svg class="ar" style="left:1555px;top:480.4px" viewBox="0 0 13 11"><path d="M0 5.5H11.6M7 .8l4.8 4.7L7 10.2" fill="none" stroke="#f0174b" stroke-width="1.5"/></svg>
<svg class="ar" style="left:1555px;top:506.1px" viewBox="0 0 13 11"><path d="M0 5.5H11.6M7 .8l4.8 4.7L7 10.2" fill="none" stroke="#f0174b" stroke-width="1.5"/></svg>
<div class="r" style="left:1282px;top:535.9px;width:610px;height:3px"></div>
<div class="d" style="left:1295px;top:551.1px">Théâtre Les Halles<br>30.01.2016</div>
<div class="d" style="left:1619.3px;top:551.1px">Sierre (CH)<br>30.01.2016</div>
<svg class="ar" style="left:1555px;top:558.9px" viewBox="0 0 13 11"><path d="M0 5.5H11.6M7 .8l4.8 4.7L7 10.2" fill="none" stroke="#f0174b" stroke-width="1.5"/></svg>
<svg class="ar" style="left:1555px;top:584.6px" viewBox="0 0 13 11"><path d="M0 5.5H11.6M7 .8l4.8 4.7L7 10.2" fill="none" stroke="#f0174b" stroke-width="1.5"/></svg>
<div class="r" style="left:1282px;top:614.4px;width:610px;height:3px"></div>
<div class="d" style="left:1295px;top:629.6px">Théâtre National de Chaillot<br>09.03.2016</div>
<div class="d" style="left:1619.3px;top:629.6px">Paris (CH)<br>17.03.2016</div>
<svg class="ar" style="left:1555px;top:637.4px" viewBox="0 0 13 11"><path d="M0 5.5H11.6M7 .8l4.8 4.7L7 10.2" fill="none" stroke="#f0174b" stroke-width="1.5"/></svg>
<svg class="ar" style="left:1555px;top:663.1px" viewBox="0 0 13 11"><path d="M0 5.5H11.6M7 .8l4.8 4.7L7 10.2" fill="none" stroke="#f0174b" stroke-width="1.5"/></svg>
<div class="r" style="left:1282px;top:692.9px;width:610px;height:3px"></div>
<div class="d" style="left:1295px;top:708.1px">Tanzfaktor @ Performa Festival<br>02.04.2016</div>
<div class="d" style="left:1619.3px;top:708.1px">Losone (CH)<br>02.04.2016</div>
<svg class="ar" style="left:1555px;top:715.9px" viewBox="0 0 13 11"><path d="M0 5.5H11.6M7 .8l4.8 4.7L7 10.2" fill="none" stroke="#f0174b" stroke-width="1.5"/></svg>
<svg class="ar" style="left:1555px;top:741.6px" viewBox="0 0 13 11"><path d="M0 5.5H11.6M7 .8l4.8 4.7L7 10.2" fill="none" stroke="#f0174b" stroke-width="1.5"/></svg>
<div class="r" style="left:1282px;top:771.4px;width:610px;height:3px"></div>
<div class="d" style="left:1295px;top:786.6px">Tanzfaktor @ Phönix Theater<br>21.04.2016</div>
<div class="d" style="left:1619.3px;top:786.6px">Steckborn (CH)<br>22.04.2016</div>
<svg class="ar" style="left:1555px;top:794.4px" viewBox="0 0 13 11"><path d="M0 5.5H11.6M7 .8l4.8 4.7L7 10.2" fill="none" stroke="#f0174b" stroke-width="1.5"/></svg>
<svg class="ar" style="left:1555px;top:820.1px" viewBox="0 0 13 11"><path d="M0 5.5H11.6M7 .8l4.8 4.7L7 10.2" fill="none" stroke="#f0174b" stroke-width="1.5"/></svg>
<div class="r" style="left:1282px;top:849.9px;width:610px;height:3px"></div>
<div class="d" style="left:1295px;top:865.1px">Tanzfest @ Südpol<br>13.05.2016</div>
<div class="d" style="left:1619.3px;top:865.1px">Luzern (CH)<br>13.05.2016</div>
<svg class="ar" style="left:1555px;top:872.9px" viewBox="0 0 13 11"><path d="M0 5.5H11.6M7 .8l4.8 4.7L7 10.2" fill="none" stroke="#f0174b" stroke-width="1.5"/></svg>
<svg class="ar" style="left:1555px;top:898.6px" viewBox="0 0 13 11"><path d="M0 5.5H11.6M7 .8l4.8 4.7L7 10.2" fill="none" stroke="#f0174b" stroke-width="1.5"/></svg>
<div class="r" style="left:1282px;top:928.4px;width:610px;height:3px"></div>
<div class="d" style="left:1295px;top:943.6px">Théâtre Sévelin 36<br>18.05.2016</div>
<div class="d" style="left:1619.3px;top:943.6px">Lausanne (CH)<br>22.05.2016</div>
<svg class="ar" style="left:1555px;top:951.4px" viewBox="0 0 13 11"><path d="M0 5.5H11.6M7 .8l4.8 4.7L7 10.2" fill="none" stroke="#f0174b" stroke-width="1.5"/></svg>
<svg class="ar" style="left:1555px;top:977.1px" viewBox="0 0 13 11"><path d="M0 5.5H11.6M7 .8l4.8 4.7L7 10.2" fill="none" stroke="#f0174b" stroke-width="1.5"/></svg>
<div class="r" style="left:1282px;top:1006.9px;width:610px;height:3px"></div>
<div class="d" style="left:1295px;top:1022.1px">Modafe Festival<br>27.05.2016</div>
<div class="d" style="left:1619.3px;top:1022.1px">Seoul (KR)<br>29.05.2016</div>
<svg class="ar" style="left:1555px;top:1029.9px" viewBox="0 0 13 11"><path d="M0 5.5H11.6M7 .8l4.8 4.7L7 10.2" fill="none" stroke="#f0174b" stroke-width="1.5"/></svg>
<svg class="ar" style="left:1555px;top:1055.6px" viewBox="0 0 13 11"><path d="M0 5.5H11.6M7 .8l4.8 4.7L7 10.2" fill="none" stroke="#f0174b" stroke-width="1.5"/></svg>
<div class="r" style="left:1282px;top:1085.4px;width:610px;height:3px"></div>
<div class="d" style="left:1295px;top:1100.6px">BE Festival<br>23.06.2016</div>
<div class="d" style="left:1619.3px;top:1100.6px">Birmingham (UK)<br>23.06.2016</div>
<svg class="ar" style="left:1555px;top:1108.4px" viewBox="0 0 13 11"><path d="M0 5.5H11.6M7 .8l4.8 4.7L7 10.2" fill="none" stroke="#f0174b" stroke-width="1.5"/></svg>
<svg class="ar" style="left:1555px;top:1134.1px" viewBox="0 0 13 11"><path d="M0 5.5H11.6M7 .8l4.8 4.7L7 10.2" fill="none" stroke="#f0174b" stroke-width="1.5"/></svg>
<div class="r" style="left:1282px;top:1163.9px;width:610px;height:3px"></div>
<div class="d" style="left:1295px;top:1179.1px">Brigittines International Festival<br>26.06.2016</div>
<div class="d" style="left:1619.3px;top:1179.1px">Bruxelles (BE)<br>27.06.2016</div>
<svg class="ar" style="left:1555px;top:1186.9px" viewBox="0 0 13 11"><path d="M0 5.5H11.6M7 .8l4.8 4.7L7 10.2" fill="none" stroke="#f0174b" stroke-width="1.5"/></svg>
<svg class="ar" style="left:1555px;top:1212.6px" viewBox="0 0 13 11"><path d="M0 5.5H11.6M7 .8l4.8 4.7L7 10.2" fill="none" stroke="#f0174b" stroke-width="1.5"/></svg>
<div class="r" style="left:1282px;top:1242.4px;width:610px;height:3px"></div>
<div class="d" style="left:1295px;top:1257.6px">International Tanzmesse<br></div>
<div class="d" style="left:1619.3px;top:1257.6px">Düsseldorf (DE)<br></div>
<svg class="ar" style="left:1555px;top:1265.4px" viewBox="0 0 13 11"><path d="M0 5.5H11.6M7 .8l4.8 4.7L7 10.2" fill="none" stroke="#f0174b" stroke-width="1.5"/></svg>
<!--/DATES-->

</div></div>
</body>
</html>
